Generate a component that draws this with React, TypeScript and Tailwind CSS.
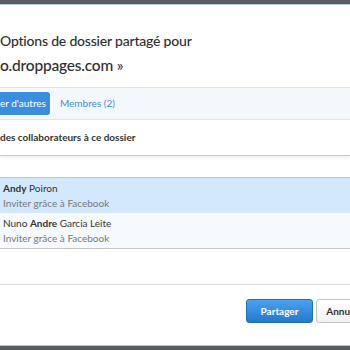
const font = { fontFamily: 'Lato, "Open Sans", "Liberation Sans", sans-serif' };

export default function App() {
  return (
    <div className="w-[350px] h-[350px] overflow-hidden flex flex-col bg-white text-[#333]" style={font}>
      <div className="h-[5px] shrink-0 bg-[#5a5d60] border-b border-[#a9c6e3]" />

      {/* Title */}
      <div className="pt-[24px] h-[82px] shrink-0">
        <h1 className="leading-[24px] font-medium tracking-[-0.2px] text-[#2e2e2e]">
          <span className="block text-[14px]">Options de dossier partagé pour</span>
          <span className="block text-[15.5px]">o.droppages.com »</span>
        </h1>
      </div>

      {/* Tabs */}
      <div className="h-[33px] shrink-0 flex items-center gap-[10px] bg-[#f4f8fd] border-y border-[#d6e6f6]">
        <div className="h-[23px] pr-[4px] flex items-center bg-[#3a8ee0] rounded-r-[3px] text-white text-[10px]">
          er d'autres
        </div>
        <div className="text-[10px] text-[#3b8ed8]">Membres (2)</div>
      </div>

      {/* Section label */}
      <div className="h-[36px] shrink-0 flex items-center border-b border-[#c9c9c9] shadow-[0_2px_3px_rgba(0,0,0,0.06)]">
        <span className="text-[10px] font-bold text-[#333]">des collaborateurs à ce dossier</span>
      </div>

      <div className="h-[21px] shrink-0" />

      {/* List */}
      <div className="shrink-0 border-y border-[#c4c4c4]">
        <div className="h-[35px] px-[3px] flex flex-col justify-center bg-[#d3e8fc]">
          <div className="text-[10px] leading-[15px] text-[#333]">
            <span className="font-bold">Andy</span> Poiron
          </div>
          <div className="text-[10px] leading-[15px] text-[#777]">Inviter grâce à Facebook</div>
        </div>
        <div className="h-[35px] px-[3px] flex flex-col justify-center bg-[#f6fafe]">
          <div className="text-[10px] leading-[15px] text-[#333]">
            Nuno <span className="font-bold">Andre</span> Garcia Leite
          </div>
          <div className="text-[10px] leading-[15px] text-[#777]">Inviter grâce à Facebook</div>
        </div>
      </div>

      <div className="h-[36px] shrink-0 border-b border-[#dcdcdc]" />

      {/* Footer */}
      <div className="flex-1 flex items-start justify-end gap-[3px] pt-[14px] -mr-[22px]">
        <button className="h-[24px] w-[67px] rounded-[3px] border border-[#1f6fbf] bg-gradient-to-b from-[#4aa3ee] to-[#2678cf] text-white text-[10px] font-bold">
          Partager
        </button>
        <button className="h-[24px] w-[56px] rounded-[3px] border border-[#c4c4c4] bg-gradient-to-b from-white to-[#f2f2f2] text-[#333] text-[10px] font-bold">
          Annuler
        </button>
      </div>

      <div className="h-[5px] shrink-0 bg-[#5a5d60] border-t border-[#a9c6e3]" />
    </div>
  );
}
